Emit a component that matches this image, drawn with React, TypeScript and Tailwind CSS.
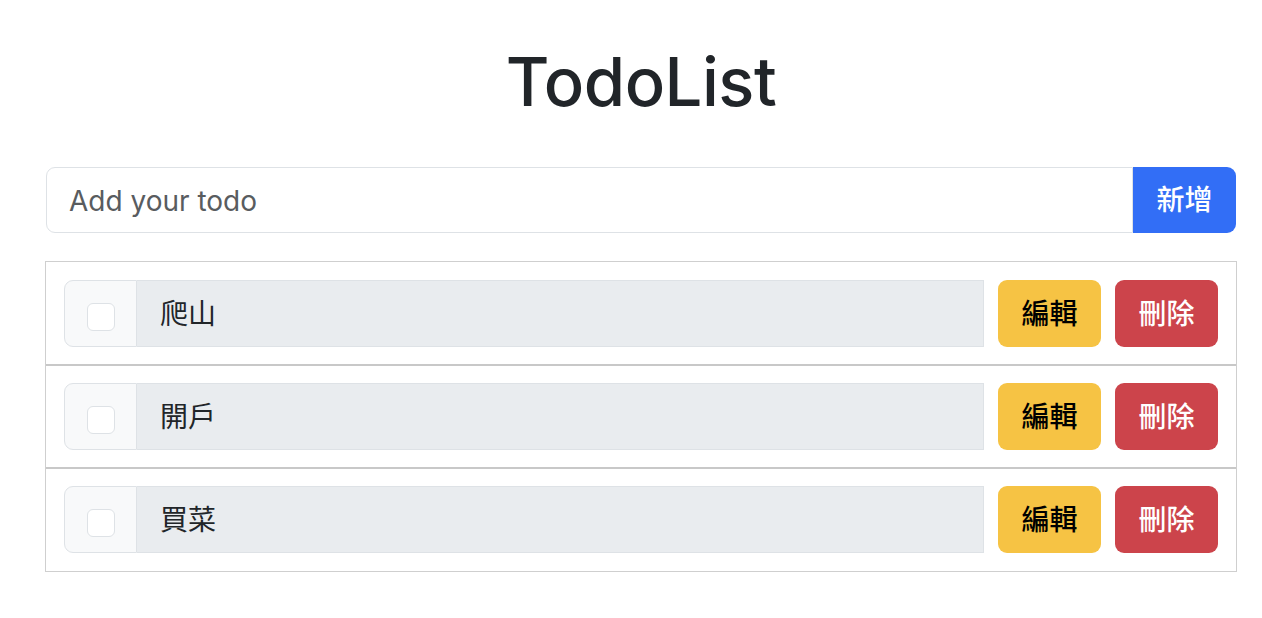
import { useState } from 'react';

type Todo = { id: number; text: string; done: boolean };

const font = { fontFamily: 'Inter, "Noto Sans CJK TC", sans-serif' };

export default function App() {
  const [todos, setTodos] = useState<Todo[]>([
    { id: 1, text: '爬山', done: false },
    { id: 2, text: '開戶', done: false },
    { id: 3, text: '買菜', done: false },
  ]);
  const [input, setInput] = useState('');

  const add = () => {
    if (!input.trim()) return;
    setTodos([...todos, { id: Date.now(), text: input, done: false }]);
    setInput('');
  };

  return (
    <div className="min-h-screen bg-white text-[#212529]" style={font}>
      <div className="ml-[45px] w-[1192px] pt-[41px]">
        <h1 className="text-center text-[67px] font-medium leading-[81px] tracking-[-0.5px]">
          TodoList
        </h1>

        <div className="mt-[45px] mx-px flex h-[66px]">
          <input
            value={input}
            onChange={(e) => setInput(e.target.value)}
            placeholder="Add your todo"
            className="flex-1 rounded-l-[9px] border border-[#dee2e6] px-[22px] pt-[2px] text-[28px] outline-none placeholder:text-[#595c5f]"
          />
          <button
            onClick={add}
            className="w-[103px] rounded-r-[9px] bg-[#326ef6] text-[28px] font-medium text-white"
          >
            新增
          </button>
        </div>

        <ul className="mt-[28px] border border-[#cfcfcf]">
          {todos.map((t, i) => (
            <li
              key={t.id}
              className={`flex items-center gap-[14px] px-[18px] ${
                i === 0 ? 'pt-[18px]' : 'pt-[17px]'
              } ${
                i === todos.length - 1
                  ? 'pb-[18px]'
                  : 'pb-[17px] border-b-2 border-[#c8c8c8]'
              }`}
            >
              <div className="flex h-[67px] flex-1">
                <div className="flex w-[73px] items-center justify-center rounded-l-[9px] border border-[#dee2e6] bg-[#f8f9fa] pt-[6px]">
                  <input
                    type="checkbox"
                    checked={t.done}
                    onChange={() =>
                      setTodos(
                        todos.map((x) =>
                          x.id === t.id ? { ...x, done: !x.done } : x
                        )
                      )
                    }
                    className="h-[28px] w-[28px] appearance-none rounded-[6px] border border-[#dee2e6] bg-white checked:bg-[#326ef6]"
                  />
                </div>
                <div className="flex flex-1 items-center border border-l-0 border-[#dee2e6] bg-[#e9ecef] px-[23px] text-[28px]">
                  {t.text}
                </div>
              </div>
              <button className="h-[67px] w-[103px] rounded-[9px] bg-[#f6c344] text-[28px] font-medium text-black">
                編輯
              </button>
              <button
                onClick={() => setTodos(todos.filter((x) => x.id !== t.id))}
                className="h-[67px] w-[103px] rounded-[9px] bg-[#cc444b] text-[28px] font-medium text-white"
              >
                刪除
              </button>
            </li>
          ))}
        </ul>
      </div>
    </div>
  );
}
